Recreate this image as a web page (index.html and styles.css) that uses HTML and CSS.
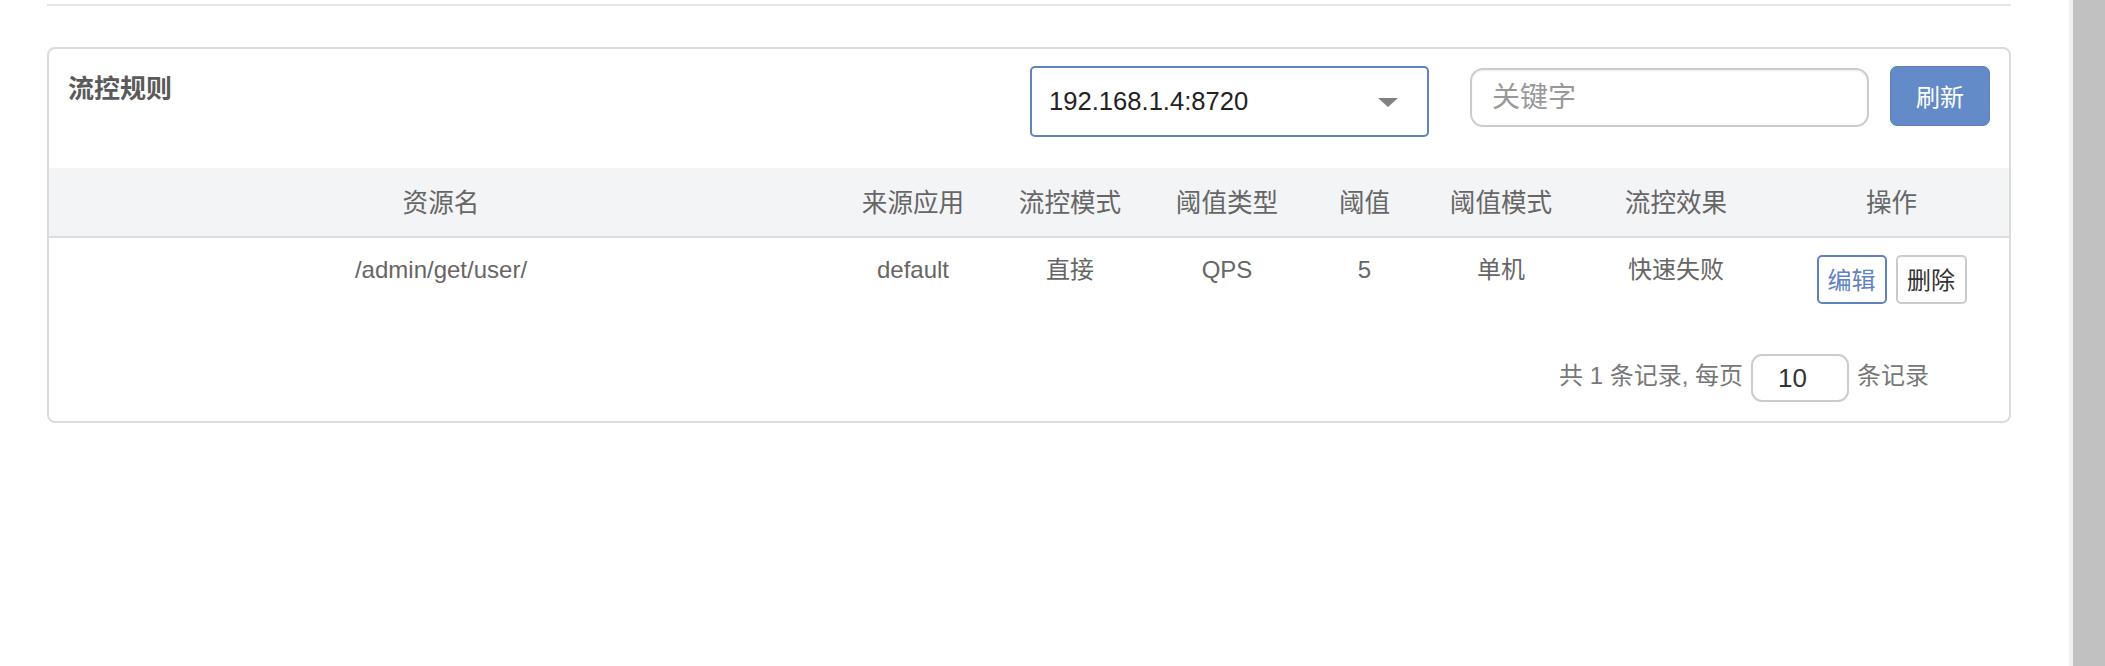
FILE: index.html
```html
<!DOCTYPE html>
<html lang="zh-CN">
<head>
<meta charset="utf-8">
<title>流控规则</title>
<link rel="stylesheet" href="styles.css">
</head>
<body>
<div class="page">
  <main class="main">
    <div class="topline"></div>
    <section class="card">
      <div class="card-head">
        <h2 class="title">流控规则</h2>
        <div class="tools">
          <div class="select"><span class="select-value">192.168.1.4:8720</span><span class="caret"></span></div>
          <input class="search" type="text" placeholder="关键字">
          <button class="btn-primary" type="button">刷新</button>
        </div>
      </div>
      <table class="rules">
        <colgroup>
          <col class="c1"><col class="c2"><col class="c3"><col class="c4"><col class="c5"><col class="c6"><col class="c7"><col class="c8">
        </colgroup>
        <thead>
          <tr>
            <th>资源名</th><th>来源应用</th><th>流控模式</th><th>阈值类型</th><th>阈值</th><th>阈值模式</th><th>流控效果</th><th>操作</th>
          </tr>
        </thead>
        <tbody>
          <tr>
            <td>/admin/get/user/</td><td>default</td><td>直接</td><td>QPS</td><td>5</td><td>单机</td><td>快速失败</td>
            <td><div class="ops"><button class="btn-edit" type="button">编辑</button><button class="btn-del" type="button">删除</button></div></td>
          </tr>
        </tbody>
      </table>
      <div class="pager">
        <span class="pager-text">共 1 条记录, 每页</span>
        <input class="pager-size" type="text" value="10">
        <span class="pager-text">条记录</span>
      </div>
    </section>
  </main>
  <div class="scrollbar"><div class="thumb"></div></div>
</div>
</body>
</html>
```

FILE: styles.css
```css
html, body {
  margin: 0;
  padding: 0;
  height: 100%;
  background: #ffffff;
}
body {
  font-family: "Liberation Sans", Arial, "Noto Sans CJK SC", sans-serif;
  color: #666;
}
.page {
  display: flex;
  height: 666px;
  overflow: hidden;
}
.main {
  flex: 1;
  padding: 0 58px 0 47px;
  min-width: 0;
}
.topline {
  margin-top: 4px;
  height: 2px;
  background: #e6e6e6;
}
.card {
  margin-top: 41px;
  border: 2px solid #dcdcdc;
  border-radius: 8px;
  overflow: hidden;
  padding-bottom: 19px;
}
.card-head {
  display: flex;
  justify-content: space-between;
  align-items: flex-start;
  padding: 17px 19px 0 19px;
  height: 102px;
}
.title {
  margin: 8px 0 0 0;
  font-size: 26px;
  line-height: 26px;
  font-weight: bold;
  color: #5a5a5a;
  font-family: "Noto Sans CJK SC", "Liberation Sans", sans-serif;
}
.tools {
  display: flex;
  align-items: flex-start;
}
.select {
  box-sizing: border-box;
  width: 399px;
  height: 71px;
  border: 2px solid #5f83c2;
  border-radius: 5px;
  display: flex;
  align-items: center;
  justify-content: space-between;
  padding: 0 29px 0 17px;
  font-size: 25.6px;
  color: #222;
}
.caret {
  width: 0;
  height: 0;
  border-left: 10px solid transparent;
  border-right: 10px solid transparent;
  border-top: 9px solid #808080;
  margin-top: 2px;
}
.search {
  box-sizing: border-box;
  margin: 2px 0 0 41px;
  width: 399px;
  height: 59px;
  border: 2px solid #cccccc;
  border-radius: 13px;
  padding: 0 20px;
  font-size: 28px;
  font-family: "Liberation Sans", Arial, "Noto Sans CJK SC", sans-serif;
  color: #333;
  box-shadow: inset 0 1px 2px rgba(0,0,0,0.08);
  outline: none;
}
.search::placeholder {
  color: #999;
}
.btn-primary {
  box-sizing: border-box;
  margin-left: 21px;
  width: 100px;
  height: 60px;
  background: #628bc8;
  border: 1px solid #5a81bd;
  border-radius: 7px;
  color: #fff;
  font-size: 24px;
  font-family: "Noto Sans CJK SC", "Liberation Sans", sans-serif;
  padding: 0 0 2px 0;
}
.rules {
  width: 100%;
  border-collapse: collapse;
  table-layout: fixed;
}
.c1 { width: 784px; }
.c2 { width: 160px; }
.c3 { width: 154px; }
.c4 { width: 160px; }
.c5 { width: 115px; }
.c6 { width: 158px; }
.c7 { width: 192px; }
.c8 { width: 239px; }
.rules th {
  background: #f3f4f6;
  height: 64px;
  padding: 0 0 4px 0;
  font-weight: normal;
  font-size: 25.6px;
  color: #666;
  text-align: center;
  border-bottom: 2px solid #dddddd;
  font-family: "Noto Sans CJK SC", "Liberation Sans", sans-serif;
}
.rules td {
  padding: 17px 0;
  text-align: center;
  vertical-align: top;
  font-size: 24px;
  line-height: 30px;
  color: #666;
}
.ops {
  display: flex;
  justify-content: center;
  gap: 9px;
}
.btn-edit, .btn-del {
  box-sizing: border-box;
  height: 49px;
  width: 70px;
  padding: 0 0 2px 0;
  background: #fff;
  border-radius: 5px;
  font-size: 24px;
  font-family: "Noto Sans CJK SC", "Liberation Sans", sans-serif;
}
.btn-edit {
  border: 2px solid #5f83c2;
  color: #5f83c2;
}
.btn-del {
  width: 71px;
  border: 2px solid #cccccc;
  color: #333;
}
.pager {
  display: flex;
  justify-content: flex-end;
  align-items: center;
  gap: 8px;
  padding-right: 80px;
  margin-top: 33px;
}
.pager-text {
  font-size: 24px;
  line-height: 28px;
  padding-bottom: 5px;
  color: #777;
}
.pager-size {
  box-sizing: border-box;
  width: 98px;
  height: 48px;
  border: 2px solid #cccccc;
  border-radius: 11px;
  padding: 0 0 0 25px;
  font-size: 26px;
  font-family: "Liberation Sans", Arial, sans-serif;
  color: #333;
  outline: none;
}
.scrollbar {
  width: 36px;
  flex: none;
  background: #f1f1f1;
  display: flex;
}
.thumb {
  margin-left: 4px;
  flex: 1;
  background: #c1c1c1;
}
```
